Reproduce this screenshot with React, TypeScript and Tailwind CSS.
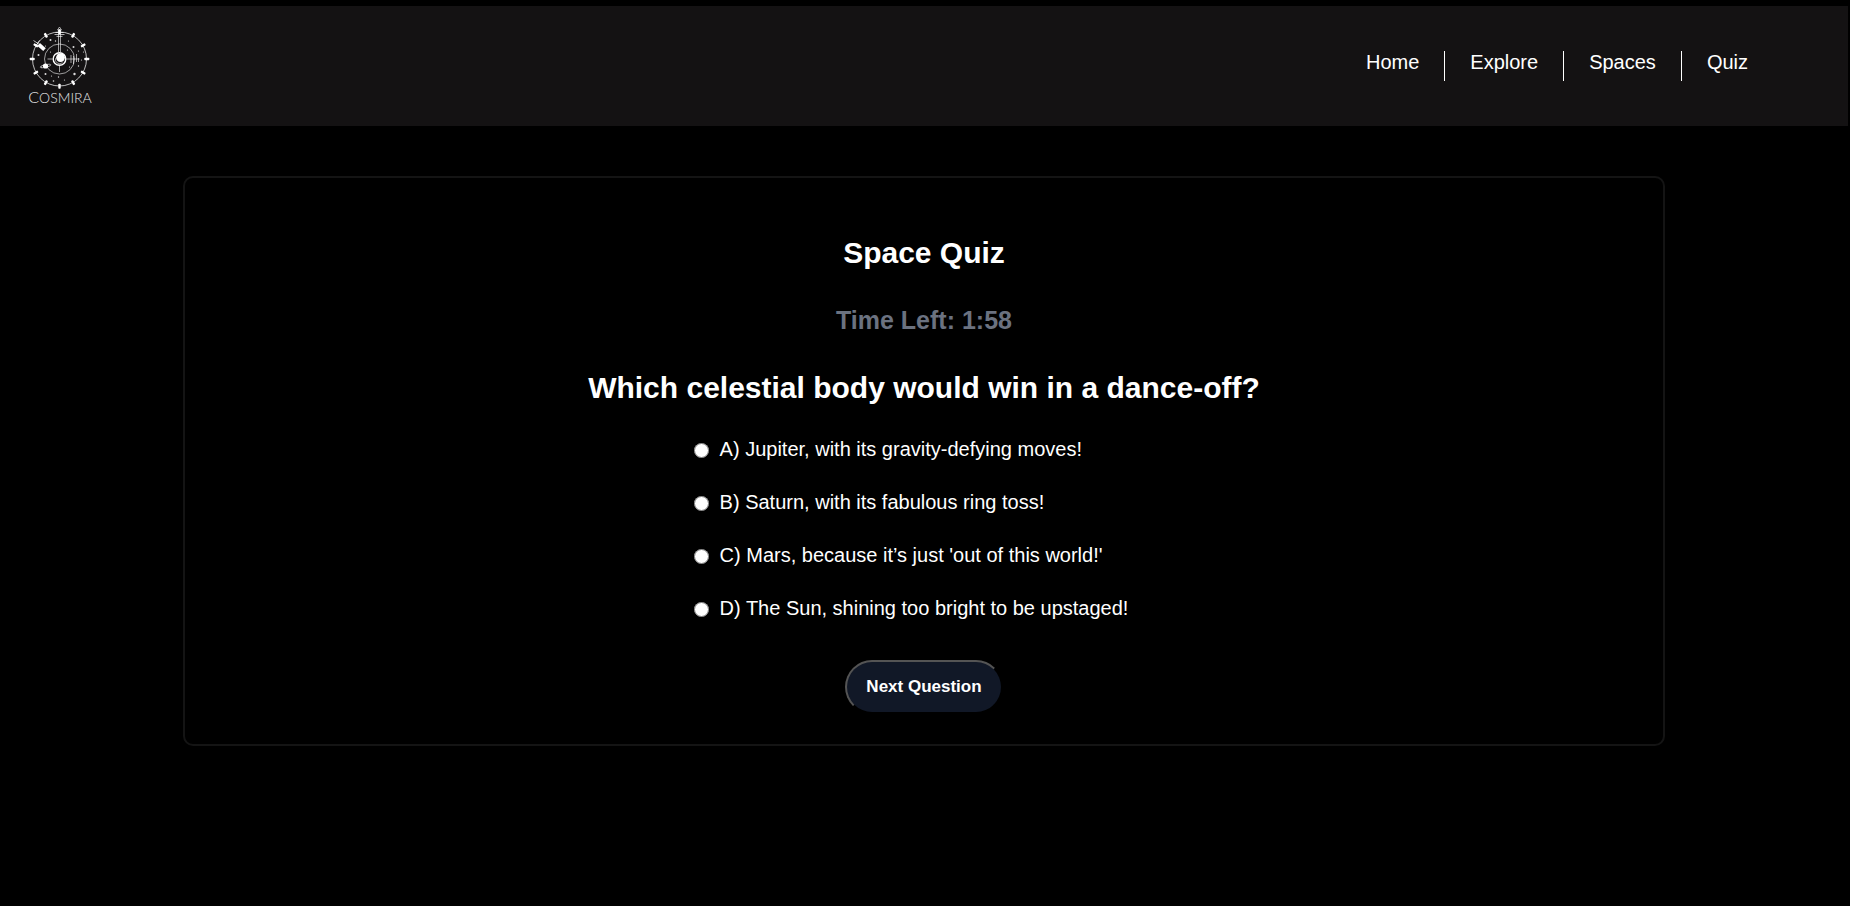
import { useState } from "react";

const links = ["Home", "Explore", "Spaces", "Quiz"];

const options = [
  "A) Jupiter, with its gravity-defying moves!",
  "B) Saturn, with its fabulous ring toss!",
  "C) Mars, because it’s just 'out of this world!'",
  "D) The Sun, shining too bright to be upstaged!",
];

const ticks = [0, 30, 60, 90, 120, 150, 180, 210, 240, 270, 300, 330];

const stars: [number, number, number][] = [
  [-9, -19, 1], [-4, -18, 0.7], [-14, -13, 0.6], [-21, -4, 1], [14, -12, 1],
  [19, -8, 0.6], [9, -18, 0.6], [-18, 8, 0.6], [-14, 15, 1], [-6, 22, 0.8],
  [5, 21, 0.6], [15, 15, 1.2], [19, 7, 0.7], [22, 1, 0.6], [-8, 17, 0.6],
  [10, 8, 0.6], [-9, -7, 0.6], [8, -9, 0.6], [24, -7, 0.6], [-1, 18, 0.7],
];

function Logo() {
  return (
    <svg viewBox="0 0 68 84" className="h-[84px] w-[68px]" role="img" aria-label="Cosmira">
      <g transform="translate(34.5 35)" fill="none" stroke="#fff">
        <circle r="27" strokeWidth="0.9" opacity="0.8" />
        <circle r="15" strokeWidth="0.9" opacity="0.65" />
        {ticks.map((angle) => (
          <rect key={angle} x="-1.2" y="24.8" width="2.4" height="5" rx="0.8" fill="#fff" stroke="none" transform={`rotate(${angle})`} />
        ))}
        {stars.map(([x, y, r]) => (
          <circle key={`${x},${y}`} cx={x} cy={y} r={r} fill="#fff" stroke="none" opacity="0.85" />
        ))}
        <path d="M-1 -29V-7M1 -29V-7" strokeWidth="0.7" opacity="0.85" />
        <path d="M-4 -26.5H4M-5 -24.5H5M-3 -22.6H3" strokeWidth="0.8" opacity="0.85" />
        <path d="M0 -32L-2 -29H2Z" strokeWidth="0.7" opacity="0.85" />
        <path d="M-12 0H-7M0 7V13M7 0H20M11.5 -4V4M14 -3V5M17 -5V3M19 -1V3" strokeWidth="0.8" opacity="0.75" />
        <path d="M-20.8 -14.5L-15 -9.3" strokeWidth="3.8" />
        <path d="M-26 -18.5L-20 -14.5M-24 -12.5L-20 -18.5" strokeWidth="0.9" opacity="0.8" />
        <ellipse cx="-14" cy="7" rx="5.4" ry="1.3" strokeWidth="0.8" opacity="0.7" transform="rotate(-12 -14 7)" />
        <circle cx="-14" cy="7" r="2.6" fill="#fff" stroke="none" />
        <circle r="6.3" fill="#141213" strokeWidth="1.4" />
        <circle cx="1" cy="-1.4" r="4.4" fill="#fff" stroke="none" />
        <path d="M-3.8 -1A4.2 4.2 0 0 0 3 3.6" strokeWidth="0.8" opacity="0.7" />
      </g>
      <text x="35" y="79" textAnchor="middle" fill="#e4e4e4" fontFamily="Lato, sans-serif" fontWeight="300" fontSize="16">
        C<tspan fontSize="14">OSMIRA</tspan>
      </text>
    </svg>
  );
}

export default function App() {
  const [answer, setAnswer] = useState<number | null>(null);

  return (
    <div className="min-h-screen bg-black pt-1.5 pr-0.5 font-['Liberation_Sans',Arial,sans-serif] text-white">
      <header className="flex h-[120px] items-center justify-between bg-[#141213] pr-[75px] pl-[25px]">
        <a href="#home" className="block">
          <Logo />
        </a>
        <nav>
          <ul className="flex text-xl leading-[23px]">
            {links.map((link) => (
              <li key={link} className="border-r border-white px-[25px] pb-[7px] last:border-r-0">
                <a href={`#${link.toLowerCase()}`}>{link}</a>
              </li>
            ))}
          </ul>
        </nav>
      </header>

      <main className="mx-auto mt-[50px] box-content flex w-4/5 flex-col items-center rounded-[10px] border-2 border-[#141414] pt-[58px] pb-[30px]">
        <h1 className="text-3xl leading-[34px] font-bold">Space Quiz</h1>
        <p className="mt-[35px] text-[25px] leading-[30px] font-bold text-[#6b7280]">Time Left: 1:58</p>
        <h2 className="mt-9 text-3xl leading-[34px] font-bold">Which celestial body would win in a dance-off?</h2>

        <div role="radiogroup" aria-label="Answers" className="mt-[33px] flex flex-col gap-[30px] pr-[26px]">
          {options.map((option, i) => (
            <label key={option} className="flex items-center gap-[11px] text-xl leading-[23px]">
              <input
                type="radio"
                name="answer"
                checked={answer === i}
                onChange={() => setAnswer(i)}
                className="mt-0.5 size-[15px]"
              />
              {option}
            </label>
          ))}
        </div>

        <button
          type="button"
          className="mt-10 rounded-full border-2 border-black bg-[#111827] px-[19px] py-[15px] text-[17px] leading-5 font-bold [border-style:outset]"
        >
          Next Question
        </button>
      </main>
    </div>
  );
}
